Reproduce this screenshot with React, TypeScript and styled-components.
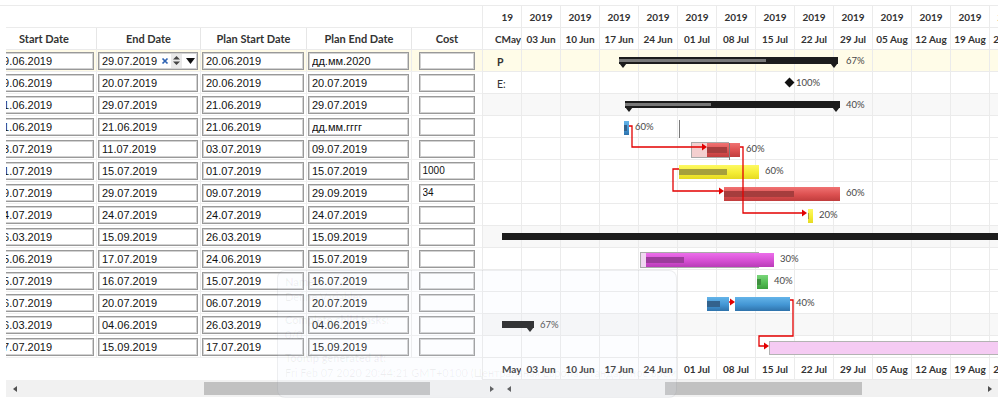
import React from 'react';
import styled, { createGlobalStyle } from 'styled-components';

const LINE = '#ebebeb';

const GlobalStyle = createGlobalStyle`
  html, body { margin: 0; padding: 0; background: #fff; }
  body { font-family: Lato, "Open Sans", sans-serif; color: #333; }
  * { box-sizing: border-box; }
`;

const Page = styled.div`
  position: relative;
  width: 1004px;
  height: 404px;
  padding-top: 5px;
  overflow: hidden;
`;

const Frame = styled.div`
  width: 998px;
  border-top: 1px solid ${LINE};
`;

const Panes = styled.div`
  display: flex;
`;

/* ---------- left grid ---------- */

const LeftPane = styled.div`
  width: 476px;
  margin-left: 6px;
  flex: none;
  overflow: hidden;
`;

const LeftTrack = styled.div`
  width: 490px;
  margin-left: -14px;
`;

const LeftRow = styled.div<{ $variant: 'spacer' | 'head' | 'body' | 'blank'; $selected?: boolean }>`
  display: grid;
  grid-template-columns: 105px 104px 106px 105px 70px;
  height: 22px;
  border-bottom: 1px solid ${p => (p.$variant === 'blank' ? 'transparent' : p.$variant === 'body' ? '#f0f0f0' : LINE)};
  background: ${p => (p.$selected ? '#fffbe7' : '#fff')};
`;

const HeadCell = styled.div`
  display: flex;
  align-items: center;
  justify-content: center;
  font-size: 11px;
  font-weight: 700;
  color: #333;
  &:not(:last-child) { border-right: 1px solid #e6e6e6; }
`;

const BodyCell = styled.div<{ $center?: boolean }>`
  display: flex;
  align-items: center;
  justify-content: ${p => (p.$center ? 'center' : 'flex-start')};
  padding: 0 2px 0 1px;
  &:not(:last-child) { border-right: 1px solid #ececec; }
`;

const Field = styled.div<{ $narrow?: boolean }>`
  display: flex;
  align-items: center;
  width: ${p => (p.$narrow ? '56px' : '100%')};
  height: 18px;
  border: 1px solid #999;
  box-shadow: inset 0 0 0 1px #d2d2d2;
  background: #fff;
`;

const Input = styled.input<{ $small?: boolean }>`
  flex: 1;
  min-width: 0;
  height: 100%;
  border: none;
  outline: none;
  background: transparent;
  padding: 0 0 0 3px;
  font-family: "Liberation Sans", Arial, sans-serif;
  font-size: ${p => (p.$small ? '10px' : '11px')};
  color: #111;
`;

const Controls = styled.span`
  display: flex;
  align-items: center;
  height: 100%;
  gap: 2px;
  padding-right: 2px;
`;

const Spin = styled.span`
  display: flex;
  align-items: center;
  height: 14px;
  background: #e9e9e9;
`;

/* ---------- chart ---------- */

const ChartPane = styled.div`
  width: 516px;
  flex: none;
  overflow: hidden;
  border-left: 1px solid ${LINE};
`;

const ScaleRow = styled.div`
  display: flex;
  height: 22px;
  border-bottom: 1px solid ${LINE};
`;

const ScaleCell = styled.div<{ $lead?: number }>`
  flex: none;
  width: 39px;
  display: flex;
  align-items: center;
  justify-content: ${p => (p.$lead ? 'flex-start' : 'center')};
  padding-left: ${p => p.$lead ?? 0}px;
  border-right: 1px solid ${LINE};
  font-size: 10px;
  font-weight: 700;
  color: #333;
  white-space: nowrap;
  overflow: hidden;
`;

const YearCut = styled.span`
  display: inline-block;
  width: 11px;
  overflow: hidden;
  direction: rtl;
`;

const ChartBody = styled.div`
  position: relative;
`;

const ChartRow = styled.div<{ $tone?: 'selected' | 'summary' }>`
  position: relative;
  height: 22px;
  border-bottom: 1px solid ${LINE};
  background-color: ${p => (p.$tone === 'selected' ? '#fffce8' : p.$tone === 'summary' ? '#f8f8f8' : '#fff')};
  background-image: linear-gradient(to right, transparent 38px, ${LINE} 38px, ${LINE} 39px);
  background-size: 39px 100%;
`;

const Stub = styled.span<{ $bold?: boolean }>`
  display: inline-block;
  padding-left: 14px;
  line-height: 21px;
  font-size: 10.5px;
  font-weight: ${p => (p.$bold ? 700 : 400)};
  color: #333;
`;

const Summary = styled.div`
  position: absolute;
  top: 7px;
  height: 7px;
  background: #1c1c1c;
`;

const SummaryFill = styled.div`
  position: absolute;
  left: 0;
  top: 2px;
  height: 3px;
  background: #787878;
`;

const Cap = styled.div`
  position: absolute;
  top: 13px;
  width: 0;
  height: 0;
  border-left: 4px solid transparent;
  border-right: 4px solid transparent;
  border-top: 5px solid #1c1c1c;
`;

const Task = styled.div<{ $fill: string; $edge?: string }>`
  position: absolute;
  top: 5px;
  height: 14px;
  background: ${p => p.$fill};
  border: ${p => (p.$edge ? `1px solid ${p.$edge}` : 'none')};
`;

const TaskFill = styled.div<{ $color: string }>`
  position: absolute;
  left: 0;
  top: 4px;
  height: 6px;
  background: ${p => p.$color};
`;

const Baseline = styled.div<{ $tint: string }>`
  position: absolute;
  top: 4px;
  height: 16px;
  background: ${p => p.$tint};
  border: 1px solid #a9a9a9;
`;

const Diamond = styled.div`
  position: absolute;
  top: 7px;
  width: 7px;
  height: 7px;
  background: #111;
  transform: rotate(45deg);
`;

const Mark = styled.div`
  position: absolute;
  width: 1px;
  background: #7a7a7a;
`;

const Pct = styled.span`
  position: absolute;
  top: 0;
  line-height: 21px;
  font-size: 9.5px;
  color: #474747;
  white-space: nowrap;
`;

const Links = styled.svg`
  position: absolute;
  left: 0;
  top: 0;
  overflow: visible;
  pointer-events: none;
`;

/* ---------- scroll bars ---------- */

const ScrollRow = styled.div`
  display: flex;
  width: 992px;
  height: 17px;
  margin-left: 6px;
  background: #f1f1f1;
`;

const Scroller = styled.div<{ $width?: number }>`
  display: flex;
  align-items: center;
  height: 100%;
  ${p => (p.$width ? `width: ${p.$width}px; flex: none;` : 'flex: 1;')}
`;

const ArrowBox = styled.span<{ $dir: 'left' | 'right' }>`
  flex: none;
  width: 17px;
  height: 17px;
  display: flex;
  align-items: center;
  justify-content: center;
  &::before {
    content: '';
    border-top: 3.5px solid transparent;
    border-bottom: 3.5px solid transparent;
    ${p => (p.$dir === 'left' ? 'border-right: 4px solid #505050;' : 'border-left: 4px solid #505050;')}
  }
`;

const ScrollTrack = styled.span`
  flex: 1;
  height: 100%;
  display: flex;
  align-items: center;
`;

const Thumb = styled.span<{ $offset: number; $size: number }>`
  height: 13px;
  margin-left: ${p => p.$offset}px;
  width: ${p => p.$size}px;
  background: #c1c1c1;
`;

/* ---------- fading tooltip ---------- */

const Tooltip = styled.div`
  position: absolute;
  left: 277px;
  top: 270px;
  width: 400px;
  height: 128px;
  padding: 3px 7px;
  border: 1px solid rgba(0, 0, 0, 0.06);
  border-radius: 8px;
  background: rgba(232, 239, 252, 0.12);
  font-size: 11px;
  line-height: 15px;
  color: rgba(0, 0, 0, 0.06);
  white-space: nowrap;
  overflow: hidden;
  pointer-events: none;
`;

const TipBlock = styled.div`
  margin-bottom: 8px;
`;

const TipLabel = styled.div`
  font-weight: 700;
`;

/* ---------- data ---------- */

type Hue = 'blue' | 'red' | 'yellow' | 'magenta' | 'green' | 'pink';

const HUES: Record<Hue, { fill: string; stripe: string; edge?: string }> = {
  blue: { fill: 'linear-gradient(#64b4e9, #4396d4 55%, #2f73ab)', stripe: '#33628c' },
  red: { fill: 'linear-gradient(#f07272, #dc5050 55%, #c03d3d)', stripe: '#a63d3d' },
  yellow: { fill: 'linear-gradient(#fdf963, #f5ed35 55%, #e5da22)', stripe: '#a6a03c' },
  magenta: { fill: 'linear-gradient(#ec6eea, #d54fd3 55%, #b93cb7)', stripe: '#9c3c9b' },
  green: { fill: 'linear-gradient(#7ad57a, #53bd53 55%, #3c9f3c)', stripe: '#3f8f3f' },
  pink: { fill: '#f5cbf3', stripe: 'transparent', edge: '#b3b3b3' },
};

type Shape =
  | { kind: 'summary'; x: number; w: number; p: number; caps: 'both' | 'right' | 'none' }
  | { kind: 'task'; x: number; w: number; p: number; hue: Hue }
  | { kind: 'base'; x: number; w: number; tint: string }
  | { kind: 'milestone'; x: number }
  | { kind: 'mark'; x: number; top: number; h: number }
  | { kind: 'label'; x: number; text: string };

type Row = {
  start: string;
  end: string;
  planStart: string;
  planEnd: string;
  cost: string;
  tone?: 'selected' | 'summary';
  stub?: { text: string; bold?: boolean };
  shapes: Shape[];
};

const rows: Row[] = [
  {
    start: '19.06.2019', end: '29.07.2019', planStart: '20.06.2019', planEnd: 'дд.мм.2020', cost: '',
    tone: 'selected', stub: { text: 'P', bold: true },
    shapes: [{ kind: 'summary', x: 136, w: 219, p: 0.67, caps: 'both' }, { kind: 'label', x: 363, text: '67%' }],
  },
  {
    start: '19.06.2019', end: '20.07.2019', planStart: '20.06.2019', planEnd: '20.07.2019', cost: '',
    stub: { text: 'E:' },
    shapes: [{ kind: 'milestone', x: 306 }, { kind: 'label', x: 313, text: '100%' }],
  },
  {
    start: '21.06.2019', end: '29.07.2019', planStart: '21.06.2019', planEnd: '29.07.2019', cost: '',
    tone: 'summary',
    shapes: [{ kind: 'summary', x: 142, w: 215, p: 0.4, caps: 'both' }, { kind: 'label', x: 363, text: '40%' }],
  },
  {
    start: '21.06.2019', end: '21.06.2019', planStart: '21.06.2019', planEnd: 'дд.мм.гггг', cost: '',
    shapes: [
      { kind: 'task', x: 141, w: 5, p: 0.6, hue: 'blue' },
      { kind: 'label', x: 152, text: '60%' },
      { kind: 'mark', x: 196, top: 4, h: 18 },
    ],
  },
  {
    start: '03.07.2019', end: '11.07.2019', planStart: '03.07.2019', planEnd: '09.07.2019', cost: '',
    shapes: [
      { kind: 'base', x: 208, w: 38, tint: '#f4cfcf' },
      { kind: 'task', x: 224, w: 33, p: 0.6, hue: 'red' },
      { kind: 'mark', x: 246, top: 5, h: 17 },
      { kind: 'label', x: 263, text: '60%' },
    ],
  },
  {
    start: '01.07.2019', end: '15.07.2019', planStart: '01.07.2019', planEnd: '15.07.2019', cost: '1000',
    shapes: [{ kind: 'task', x: 196, w: 80, p: 0.6, hue: 'yellow' }, { kind: 'label', x: 282, text: '60%' }],
  },
  {
    start: '09.07.2019', end: '29.07.2019', planStart: '09.07.2019', planEnd: '29.09.2019', cost: '34',
    shapes: [{ kind: 'task', x: 241, w: 116, p: 0.6, hue: 'red' }, { kind: 'label', x: 363, text: '60%' }],
  },
  {
    start: '24.07.2019', end: '24.07.2019', planStart: '24.07.2019', planEnd: '24.07.2019', cost: '',
    shapes: [{ kind: 'task', x: 325, w: 5, p: 0.2, hue: 'yellow' }, { kind: 'label', x: 336, text: '20%' }],
  },
  {
    start: '26.03.2019', end: '15.09.2019', planStart: '26.03.2019', planEnd: '15.09.2019', cost: '',
    tone: 'summary',
    shapes: [{ kind: 'summary', x: 19, w: 620, p: 0, caps: 'none' }],
  },
  {
    start: '25.06.2019', end: '17.07.2019', planStart: '24.06.2019', planEnd: '15.07.2019', cost: '',
    shapes: [
      { kind: 'base', x: 157, w: 119, tint: '#f1d6f1' },
      { kind: 'task', x: 163, w: 128, p: 0.3, hue: 'magenta' },
      { kind: 'label', x: 297, text: '30%' },
    ],
  },
  {
    start: '15.07.2019', end: '16.07.2019', planStart: '15.07.2019', planEnd: '16.07.2019', cost: '',
    shapes: [{ kind: 'task', x: 274, w: 11, p: 0.4, hue: 'green' }, { kind: 'label', x: 291, text: '40%' }],
  },
  {
    start: '06.07.2019', end: '20.07.2019', planStart: '06.07.2019', planEnd: '20.07.2019', cost: '',
    shapes: [
      { kind: 'task', x: 224, w: 22, p: 0.6, hue: 'blue' },
      { kind: 'task', x: 252, w: 55, p: 0, hue: 'blue' },
      { kind: 'label', x: 313, text: '40%' },
    ],
  },
  {
    start: '26.03.2019', end: '04.06.2019', planStart: '26.03.2019', planEnd: '04.06.2019', cost: '',
    tone: 'summary',
    shapes: [{ kind: 'summary', x: 19, w: 32, p: 0, caps: 'right' }, { kind: 'label', x: 57, text: '67%' }],
  },
  {
    start: '17.07.2019', end: '15.09.2019', planStart: '17.07.2019', planEnd: '15.09.2019', cost: '',
    shapes: [{ kind: 'task', x: 286, w: 400, p: 0, hue: 'pink' }],
  },
];

const columns = ['Start Date', 'End Date', 'Plan Start Date', 'Plan End Date', 'Cost'];

const weeks = ['03 Jun', '10 Jun', '17 Jun', '24 Jun', '01 Jul', '08 Jul', '15 Jul', '22 Jul', '29 Jul', '05 Aug', '12 Aug', '19 Aug', '26 Aug'];

// dependency lines, in chart-body coordinates
const links: { path: string; tip: [number, number] }[] = [
  { path: 'M146 76 H149 V97 H220', tip: [224, 97] },
  { path: 'M257 97 H260 V163 H320', tip: [324, 163] },
  { path: 'M196 119 H190 V141 H237', tip: [241, 141] },
  { path: 'M246 252 H248', tip: [252, 252] },
  { path: 'M307 250 H310 V286 H276 V296 H282', tip: [286, 296] },
];

/* ---------- parts ---------- */

const EditControls = () => (
  <Controls>
    <svg width="8" height="8" viewBox="0 0 8 8">
      <path d="M1.5 1.5 L6.5 6.5 M6.5 1.5 L1.5 6.5" stroke="#2f63b3" strokeWidth="1.7" />
    </svg>
    <Spin>
      <svg width="11" height="13" viewBox="0 0 11 13">
        <path d="M2 5.5 L5.5 2 L9 5.5 Z M2 7.5 L5.5 11 L9 7.5 Z" fill="#444" />
      </svg>
    </Spin>
    <svg width="9" height="6" viewBox="0 0 9 6" style={{ marginLeft: 2 }}>
      <path d="M0 0 H9 L4.5 6 Z" fill="#111" />
    </svg>
  </Controls>
);

const DateCell = ({ value, editing }: { value: string; editing?: boolean }) => (
  <BodyCell>
    <Field>
      <Input readOnly value={value} />
      {editing && <EditControls />}
    </Field>
  </BodyCell>
);

const ShapeView = ({ s }: { s: Shape }) => {
  switch (s.kind) {
    case 'summary':
      return (
        <>
          <Summary style={{ left: s.x, width: s.w }}>
            {s.p > 0 && <SummaryFill style={{ width: Math.round(s.w * s.p) }} />}
          </Summary>
          {s.caps === 'both' && <Cap style={{ left: s.x }} />}
          {s.caps !== 'none' && <Cap style={{ left: s.x + s.w - 8 }} />}
        </>
      );
    case 'task': {
      const hue = HUES[s.hue];
      return (
        <Task $fill={hue.fill} $edge={hue.edge} style={{ left: s.x, width: s.w }}>
          {s.p > 0 && <TaskFill $color={hue.stripe} style={{ width: Math.max(1, Math.round(s.w * s.p)) }} />}
        </Task>
      );
    }
    case 'base':
      return <Baseline $tint={s.tint} style={{ left: s.x, width: s.w }} />;
    case 'milestone':
      return <Diamond style={{ left: s.x - 3.5 }} />;
    case 'mark':
      return <Mark style={{ left: s.x, top: s.top, height: s.h }} />;
    case 'label':
      return <Pct style={{ left: s.x }}>{s.text}</Pct>;
  }
};

export default function App() {
  return (
    <>
      <GlobalStyle />
      <Page>
        <Frame>
          <Panes>
            <LeftPane>
              <LeftTrack>
                <LeftRow $variant="spacer" />
                <LeftRow $variant="head">
                  {columns.map(c => (
                    <HeadCell key={c}>{c}</HeadCell>
                  ))}
                </LeftRow>
                {rows.map((r, i) => (
                  <LeftRow key={i} $variant="body" $selected={r.tone === 'selected'}>
                    <DateCell value={r.start} />
                    <DateCell value={r.end} editing={i === 0} />
                    <DateCell value={r.planStart} />
                    <DateCell value={r.planEnd} />
                    <BodyCell $center>
                      <Field $narrow>
                        <Input $small readOnly value={r.cost} />
                      </Field>
                    </BodyCell>
                  </LeftRow>
                ))}
                <LeftRow $variant="blank" />
              </LeftTrack>
            </LeftPane>

            <ChartPane>
              <ScaleRow>
                <ScaleCell $lead={19}>
                  <YearCut>2019</YearCut>
                </ScaleCell>
                {weeks.map(w => (
                  <ScaleCell key={w}>2019</ScaleCell>
                ))}
              </ScaleRow>
              <ScaleRow>
                <ScaleCell $lead={12}>CMay</ScaleCell>
                {weeks.map(w => (
                  <ScaleCell key={w}>{w}</ScaleCell>
                ))}
              </ScaleRow>
              <ChartBody>
                {rows.map((r, i) => (
                  <ChartRow key={i} $tone={r.tone}>
                    {r.stub && <Stub $bold={r.stub.bold}>{r.stub.text}</Stub>}
                    {r.shapes.map((s, j) => (
                      <ShapeView key={j} s={s} />
                    ))}
                  </ChartRow>
                ))}
                <Links width="516" height="308">
                  {links.map((l, i) => (
                    <g key={i}>
                      <path d={l.path} fill="none" stroke="#e30000" strokeWidth="1.3" />
                      <polygon
                        points={`${l.tip[0]},${l.tip[1]} ${l.tip[0] - 5},${l.tip[1] - 3.5} ${l.tip[0] - 5},${l.tip[1] + 3.5}`}
                        fill="#e30000"
                      />
                    </g>
                  ))}
                </Links>
              </ChartBody>
              <ScaleRow>
                <ScaleCell $lead={19}>May</ScaleCell>
                {weeks.map(w => (
                  <ScaleCell key={w}>{w}</ScaleCell>
                ))}
              </ScaleRow>
            </ChartPane>
          </Panes>

          <ScrollRow>
            <Scroller $width={494}>
              <ArrowBox $dir="left" />
              <ScrollTrack>
                <Thumb $offset={181} $size={226} />
              </ScrollTrack>
              <ArrowBox $dir="right" />
            </Scroller>
            <Scroller>
              <ArrowBox $dir="left" />
              <ScrollTrack>
                <Thumb $offset={148} $size={197} />
              </ScrollTrack>
              <ArrowBox $dir="right" />
            </Scroller>
          </ScrollRow>
        </Frame>

        <Tooltip>
          <TipLabel>Name:</TipLabel>
          <TipBlock>Define Variables</TipBlock>
          <TipLabel>Complete child tasks:</TipLabel>
          <TipBlock>0/0</TipBlock>
          <TipLabel>Tooltip generated at:</TipLabel>
          <div>Fri Feb 07 2020 20:44:21 GMT+0100 (Центральная Европа, стандартное время)</div>
        </Tooltip>
      </Page>
    </>
  );
}
